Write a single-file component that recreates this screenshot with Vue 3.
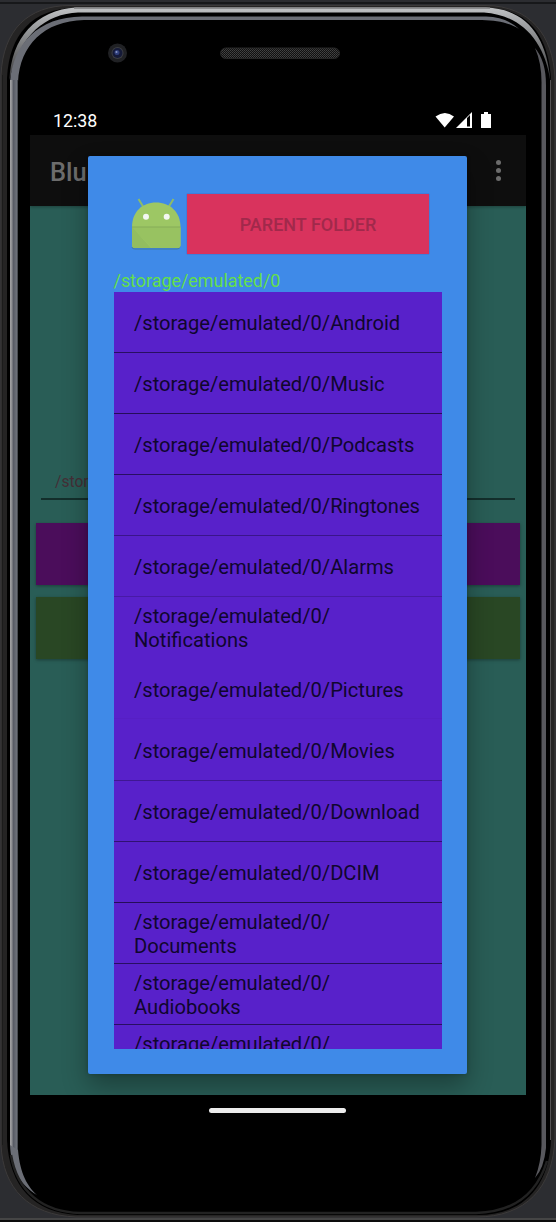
<script setup>
const folders = [
  { name: 'Android', line: 0.65 },
  { name: 'Music', line: 0.7 },
  { name: 'Podcasts', line: 0.65 },
  { name: 'Ringtones', line: 0.4 },
  { name: 'Alarms', line: 0.22 },
  { name: 'Notifications', wrap: true, line: 0 },
  { name: 'Pictures', line: 0.03 },
  { name: 'Movies', line: 0.35 },
  { name: 'Download', line: 0.55 },
  { name: 'DCIM', line: 0.7 },
  { name: 'Documents', wrap: true, line: 0.65 },
  { name: 'Audiobooks', wrap: true, line: 0.65 },
  { name: '', wrap: true, line: 0 },
]
</script>

<template>
  <div class="stage">
    <svg class="frame" viewBox="0 0 556 1222" width="556" height="1222">
      <defs>
        <linearGradient id="rim" x1="0" y1="8" x2="0" y2="80" gradientUnits="userSpaceOnUse">
          <stop offset="0" stop-color="#bfc1c3" />
          <stop offset="0.3" stop-color="#96989a" />
          <stop offset="1" stop-color="#3a3a3b" />
        </linearGradient>
        <linearGradient id="side" x1="10" y1="0" x2="18" y2="0" gradientUnits="userSpaceOnUse">
          <stop offset="0" stop-color="#a4a4a6" />
          <stop offset="0.25" stop-color="#8a8b8f" />
          <stop offset="0.4" stop-color="#575a64" />
          <stop offset="0.85" stop-color="#6f737b" />
          <stop offset="1" stop-color="#2c2e34" />
        </linearGradient>
        <pattern id="mesh" width="2" height="2" patternUnits="userSpaceOnUse">
          <rect width="2" height="2" fill="#111" />
          <rect width="1" height="1" fill="#444" />
          <rect x="1" y="1" width="1" height="1" fill="#3a3a3a" />
        </pattern>
      </defs>
      <rect width="556" height="1222" fill="#2c2d31" />
      <rect y="2" width="556" height="2" fill="#17181a" />
      <rect y="1218" width="556" height="2" fill="#454545" />
      <rect y="1220" width="556" height="2" fill="#0c0c0c" />
      <path d="M1 1145V75C3 30 28 5.500 70 5.500H486C530 6 553 35 555 78V1138C553 1188 526 1217 476 1217H76C28 1215 3 1188 1 1145Z" fill="#252424" stroke="#3c3a3a" />
      <path d="M7 1140V78C9 35 32 8 76 8H488C528 9 549 36 551 80V1140C549 1186 524 1215 478 1215H78C34 1213 9 1186 7 1140Z" fill="#000" />
      <path d="M2.500 1145V75" stroke="#1b1b1b" stroke-width="1" />
      <path d="M550.500 1140V80" stroke="#555354" stroke-width="1" />
      <path d="M9.500 80C11 38 36 10 76 7.500H486C526 9 547 36 550.500 82C545 41 521 15 484 12.500H78C46 14 20 34 9.500 80Z" fill="url(#rim)" />
      <path d="M74 8.200H490" stroke="#8d8e90" stroke-width="1.400" />
      <path d="M10 1145V82C13 44 38 17 82 16.500H486C501 17 512 22 519 29C507 22 497 20.500 482 20H84C44 21 20 45 18 82V1150C20 1174 28 1187 37 1195C19 1184 11 1168 10 1145Z" fill="#6b6e76" />
      <path d="M10 80H18V1150L10 1145Z" fill="url(#side)" />
      <path d="M535 48Q546 61 546 85V1148Q544 1168 535 1178Q541 1163 541.500 1145V85Q542 64 535 48Z" fill="#58585d" />
      <path d="M11 1155C17 1191 42 1212 80 1213H476C514 1212 537 1194 547 1161" fill="none" stroke="#222" stroke-width="2.500" />
      <circle cx="117.500" cy="53" r="9.500" fill="#202124" />
      <circle cx="117.500" cy="53" r="6" fill="#3b3d42" />
      <circle cx="117.500" cy="53" r="5" fill="#151a38" />
      <circle cx="117" cy="52.500" r="2.500" fill="#303f7c" />
      <circle cx="116.500" cy="52" r="1" fill="#8795c4" />
      <rect x="220.500" y="48" width="119" height="10.500" rx="5.250" fill="url(#mesh)" stroke="#262626" />
    </svg>

    <main class="screen">
      <header class="status">
        <span>12:38</span>
        <svg width="58" height="20" viewBox="0 0 58 20" fill="#fff">
          <path d="M0.500 5.500Q10 -1.500 19 5.500L9.700 16.500Z" />
          <path d="M21 17 37 1V17ZM32 7V15.500H35V4Z" fill-rule="evenodd" />
          <path d="M49 1h4v2h3v14H46V3h3Z" />
        </svg>
      </header>
      <section class="app">
        <div class="toolbar">
          <span>Blu</span>
          <i class="more"><b></b><b></b><b></b></i>
        </div>
        <div class="field">/stor</div>
        <div class="block purple"></div>
        <div class="block green"></div>

        <section class="dialog">
          <div class="head">
            <svg class="robot" width="56" height="56" viewBox="0 0 56 56">
              <path d="M4 51Q4 53 7 53H49Q52 53 52 50.500" stroke="#4579a0" stroke-width="1" fill="none" />
              <path d="M10.500 3 16 12M45.500 3 40 12" stroke="#8dbb68" stroke-width="2" />
              <path d="M4 31C4 16 14 6.500 28 6.500S52.500 16 52.500 31V49Q52.500 52 49.500 52H7Q4 52 4 49Z" fill="#9dc764" />
              <path d="M4 31H52.500V49Q52.500 52 49.500 52H24Z" fill="#98c261" />
              <path d="M4 31 23 52H7Q4 52 4 49Z" fill="#93bd5f" />
              <path d="M4 31H52.500" stroke="#85ac58" stroke-width="1" />
              <circle cx="18" cy="20.700" r="3" fill="#f4f7f2" />
              <circle cx="38.700" cy="20.700" r="3" fill="#f4f7f2" />
            </svg>
            <div class="parent">PARENT FOLDER</div>
          </div>
          <div class="path">/storage/emulated/0</div>
          <div class="list">
            <div v-for="f in folders" :key="f.name" class="item">
              <span>/storage/emulated/0/<template v-if="f.wrap"><br>{{ f.name || '\u00a0' }}</template><template v-else>{{ f.name }}</template></span>
              <i class="line" :style="{ opacity: f.line }"></i>
            </div>
          </div>
        </section>
      </section>
      <div class="nav"><i></i></div>
    </main>
  </div>
</template>

<style>
body { background: #2c2d31; overflow: hidden; }
</style>

<style scoped>
* { box-sizing: border-box; }
.stage { position: relative; width: 556px; height: 1222px; padding: 106px 30px 0; overflow: hidden; font-family: Roboto, sans-serif; }
.frame { position: absolute; inset: 0; display: block; }
.screen { position: relative; width: 496px; height: 1020px; }
.status { height: 29px; padding: 5px 31px 0 23px; display: flex; justify-content: space-between; align-items: flex-start; background: #000; color: #fff; font-size: 17.800px; line-height: 20px; }
.status svg { display: block; margin-right: 2px; }
.app { position: relative; height: 960px; background: #295d56; overflow: hidden; }
.toolbar { height: 71px; padding: 3px 25.500px 0 20px; display: flex; align-items: center; justify-content: space-between; background: #0e0e0e; color: #6c6c6c; font-size: 25.400px; font-weight: 500; box-shadow: 0 1px 3px rgba(0,0,0,.3); }
.more { display: grid; gap: 2.600px; margin-top: -3px; }
.more b { width: 5px; height: 5px; border-radius: 50%; background: #6c6c6c; }
.field { margin: 263px 11px 0; height: 31px; padding: 3px 14px; border-bottom: 2px solid #132e2b; color: #442f36; font-size: 15.600px; line-height: 20px; }
.block { height: 62px; margin: 23px 6px 0; box-shadow: 0 1px 3px rgba(0,0,0,.35); }
.block.green { margin-top: 12.400px; }
.purple { background: #4b0d5b; }
.green { background: #294724; }
.dialog { position: absolute; left: 58px; top: 20.500px; width: 379px; height: 918.800px; padding: 38px 25px 0 25.500px; border-radius: 2px; background: #3f8ae8; box-shadow: 0 12px 26px rgba(0,0,0,.32), 0 0 4px rgba(0,0,0,.2); }
.head { display: flex; height: 76px; padding-left: 14.500px; }
.robot { display: block; margin: 2px 3px 0 0; flex: none; }
.parent { width: 242px; height: 60px; display: flex; align-items: center; justify-content: center; padding-top: 2px; background: #d9335d; color: #a1294b; font-size: 18.050px; font-weight: 500; box-shadow: 0 0 1px rgba(80,20,100,.6); }
.path { height: 22px; color: #64df4b; font-size: 17.900px; line-height: 21px; }
.list { width: 328.500px; height: 757px; overflow: hidden; background: #5821ca; }
.item { position: relative; height: 61.130px; padding-left: 20.500px; display: flex; align-items: center; color: #10062e; font-size: 20.150px; line-height: 24px; white-space: nowrap; }
.item span { margin-top: 1.400px; }
.line { position: absolute; left: 0; right: 0; bottom: 0; height: 1px; background: #10062a; }
.nav { height: 30px; padding-right: 1px; display: flex; justify-content: center; align-items: center; background: #000; }
.nav i { width: 137px; height: 5px; border-radius: 3px; background: #ececec; }
</style>
